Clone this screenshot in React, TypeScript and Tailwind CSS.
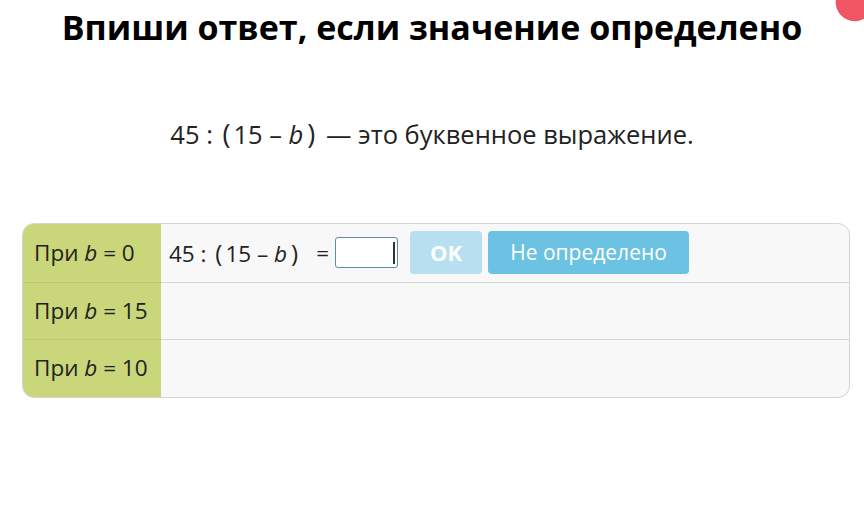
export default function App() {
  const rows = ["0", "15", "10"];
  return (
    <div className="relative w-[864px] h-[521px] overflow-hidden bg-white font-['Open_Sans',sans-serif] text-[#222]">
      <div className="absolute -right-[12px] -top-[24px] w-[38px] h-[46px] rounded-full bg-[#ef5563] rotate-[35deg]" />
      <h1 className="pt-[6px] text-center text-[34px] font-bold leading-[42px] text-black">
        Впиши ответ, если значение определено
      </h1>
      <p className="mt-[69px] text-center text-[25.5px] leading-[34px]">
        45 : <span className="mx-[3px] text-[27px]">(</span>15 – <i>b</i>
        <span className="mx-[4px] text-[27px]">)</span> — это буквенное выражение.
      </p>
      <div className="ml-[22px] mt-[72px] flex w-[828px] flex-col overflow-hidden rounded-[12px] border border-[#d4d4d4] bg-[#f8f8f8]">
        {rows.map((v, i) => (
          <div
            key={v}
            className={`flex h-[57.5px] ${i > 0 ? "border-t border-[#d6d6d6]" : ""}`}
          >
            <div
              className={`flex w-[138px] items-center bg-[#c9d67a] pl-[11px] text-[22.5px] ${
                i > 0 ? "-mt-px border-t border-[#bcc870]" : ""
              }`}
            >
              При&nbsp;<i>b</i>&nbsp;= {v}
            </div>
            {i === 0 && (
              <div className="flex items-center pl-[8px] text-[22.5px]">
                <span className="whitespace-nowrap">
                  45 : <span className="mx-[3px] text-[24px]">(</span>15 – <i>b</i>
                  <span className="mx-[4px] text-[24px]">)</span>
                </span>
                <span className="ml-[14px]">=</span>
                <div className="ml-[6px] flex h-[31px] w-[63px] items-center justify-end rounded-[3px] border border-[#5b8fa3] bg-white pr-[2px]">
                  <div className="h-[22px] w-[2px] bg-[#333]" />
                </div>
                <button className="ml-[12px] h-[43px] w-[72px] rounded-[4px] bg-[#b7dff0] text-[22px] font-bold text-white">
                  OK
                </button>
                <button className="ml-[6px] h-[43px] w-[201px] rounded-[4px] bg-[#6cc2e2] text-[21px] text-white">
                  Не определено
                </button>
              </div>
            )}
          </div>
        ))}
      </div>
    </div>
  );
}
